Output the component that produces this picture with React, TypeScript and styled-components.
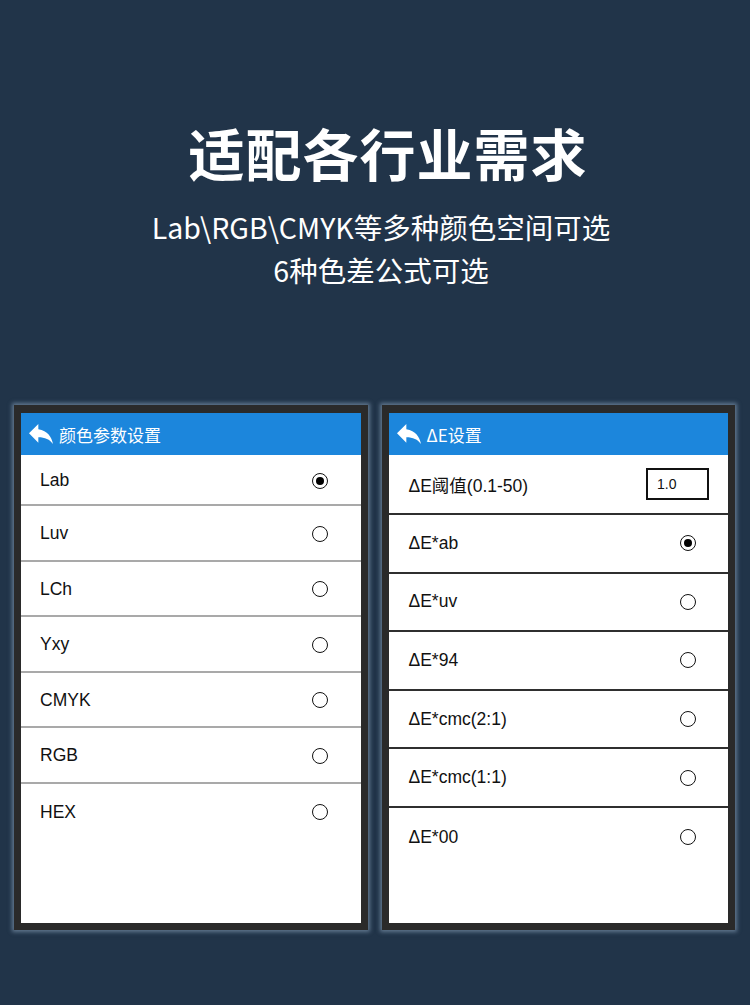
import React from 'react';
import styled, { createGlobalStyle } from 'styled-components';

const GlobalStyle = createGlobalStyle`
  html, body {
    margin: 0;
    padding: 0;
    background: #213449;
  }
  body {
    font-family: "Noto Sans CJK SC", "Noto Sans", sans-serif;
  }
`;

const Page = styled.div`
  width: 750px;
  height: 1005px;
  background: #213449;
  display: flex;
  flex-direction: column;
  overflow: hidden;
`;

const Hero = styled.header`
  padding-top: 117px;
  height: 284px;
  box-sizing: border-box;
  display: flex;
  flex-direction: column;
  align-items: center;
  color: #ffffff;
`;

const Title = styled.h1`
  margin: 0 0 0 26px;
  font-family: "Noto Sans CJK SC", sans-serif;
  font-weight: 700;
  font-size: 56px;
  line-height: 70px;
  letter-spacing: 1px;
`;

const Subtitle = styled.p`
  margin: 0 0 0 12px;
  font-family: "Noto Sans CJK SC", "Noto Sans", sans-serif;
  font-weight: 400;
  font-size: 28.5px;
  line-height: 43px;
  text-align: center;
  &:first-of-type {
    margin-top: 18px;
  }
`;

const Panels = styled.div`
  display: flex;
  gap: 14px;
  padding: 0 15px 0 14px;
  margin-top: 121px;
`;

const Frame = styled.section`
  flex: 1;
  height: 525px;
  box-sizing: border-box;
  border: 7px solid #2a2a2a;
  border-top-width: 8px;
  background: #ffffff;
  box-shadow: 0 0 4px 2px rgba(150, 175, 200, 0.55);
  display: flex;
  flex-direction: column;
`;

const Bar = styled.div`
  height: 42px;
  background: #1c86dc;
  display: flex;
  align-items: center;
  padding-left: 8px;
  gap: 6px;
  color: #ffffff;
  font-size: 17px;
`;

const BarTitle = styled.span`
  font-family: "Noto Sans CJK SC", sans-serif;
  font-weight: 400;
  line-height: 1;
`;

const Row = styled.div<{ $h: number; $line: string }>`
  height: ${(p) => p.$h}px;
  box-sizing: border-box;
  flex-shrink: 0;
  display: flex;
  align-items: center;
  justify-content: space-between;
  padding: ${(p) => (p.$line === 'dark' ? '0 32px 0 20px' : '2px 33px 0 19px')};
  border-bottom: 2px solid ${(p) => (p.$line === 'dark' ? '#2f2f2f' : '#a9a9a9')};
  &:last-child {
    border-bottom: none;
  }
`;

const Label = styled.span`
  font-family: "Liberation Sans", Arial, "Noto Sans CJK SC", sans-serif;
  font-size: 17.5px;
  color: #111111;
`;

const Radio = styled.span<{ $on?: boolean }>`
  width: 14px;
  height: 14px;
  border: 1.6px solid #111111;
  border-radius: 50%;
  display: flex;
  align-items: center;
  justify-content: center;
  &::after {
    content: '';
    width: 8px;
    height: 8px;
    border-radius: 50%;
    background: #000000;
    display: ${(p) => (p.$on ? 'block' : 'none')};
  }
`;

const ValueBox = styled.div`
  width: 50px;
  height: 28px;
  border: 2px solid #111111;
  display: flex;
  align-items: center;
  padding-left: 9px;
  margin-right: -13px;
  font-family: "Liberation Sans", Arial, sans-serif;
  font-size: 14px;
  color: #111111;
`;

const BackIcon = () => (
  <svg width="24" height="20" viewBox="3 5 18 15" fill="#ffffff">
    <path d="M10 9V5l-7 7 7 7v-4.1c5 0 8.5 1.6 11 5.1-1-5-4-10-11-11z" />
  </svg>
);

const spaces = ['Lab', 'Luv', 'LCh', 'Yxy', 'CMYK', 'RGB', 'HEX'];
const formulas = ['ΔE*ab', 'ΔE*uv', 'ΔE*94', 'ΔE*cmc(2:1)', 'ΔE*cmc(1:1)', 'ΔE*00'];

export default function App() {
  return (
    <Page>
      <GlobalStyle />
      <Hero>
        <Title>适配各行业需求</Title>
        <Subtitle>Lab\RGB\CMYK等多种颜色空间可选</Subtitle>
        <Subtitle>6种色差公式可选</Subtitle>
      </Hero>
      <Panels>
        <Frame>
          <Bar>
            <BackIcon />
            <BarTitle>颜色参数设置</BarTitle>
          </Bar>
          {spaces.map((s, i) => (
            <Row key={s} $h={i === 0 ? 51 : 55.5} $line="light">
              <Label>{s}</Label>
              <Radio $on={i === 0} />
            </Row>
          ))}
        </Frame>
        <Frame>
          <Bar>
            <BackIcon />
            <BarTitle>ΔE设置</BarTitle>
          </Bar>
          <Row $h={60} $line="dark">
            <Label>ΔE阈值(0.1-50)</Label>
            <ValueBox>1.0</ValueBox>
          </Row>
          {formulas.map((f, i) => (
            <Row key={f} $h={58.6} $line="dark">
              <Label>{f}</Label>
              <Radio $on={i === 0} />
            </Row>
          ))}
        </Frame>
      </Panels>
    </Page>
  );
}
